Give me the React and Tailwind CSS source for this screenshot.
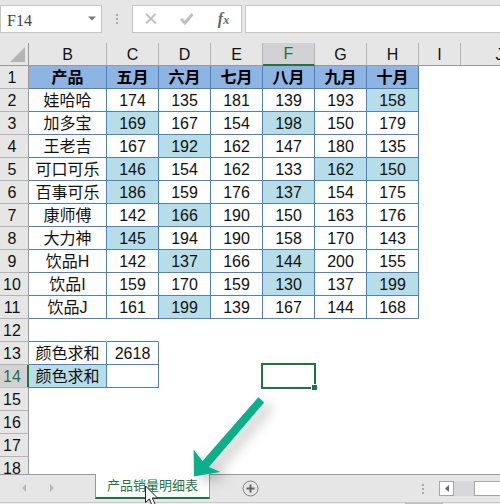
const MONTHS = ['五月', '六月', '七月', '八月', '九月', '十月'];
const COLUMNS = ['B', 'C', 'D', 'E', 'F', 'G', 'H', 'I', 'J'];

// A negative number marks a highlighted cell.
const PRODUCTS = [
  ['娃哈哈', 174, 135, 181, 139, 193, -158],
  ['加多宝', -169, 167, 154, -198, 150, 179],
  ['王老吉', 167, -192, 162, 147, 180, 135],
  ['可口可乐', -146, 154, 162, 133, -162, -150],
  ['百事可乐', -186, 159, 176, -137, 154, 175],
  ['康师傅', 142, -166, 190, 150, 163, 176],
  ['大力神', -145, 194, 190, 158, 170, 143],
  ['饮品H', 142, -137, 166, -144, 200, 155],
  ['饮品I', 159, 170, 159, -130, 137, -199],
  ['饮品J', 161, -199, 139, 167, 144, 168],
];

const CELL = 'h-[23px] px-0 pt-[2px] pb-0 text-center border-r border-b font-normal leading-[20px] ';
const LINED = CELL + 'border-[#4f81bd] ';
const BLANK = CELL + 'border-transparent ';
const HEADING = 'h-[23px] px-0 pt-px pb-0 text-center border-r border-b font-normal leading-[20px] ';

function RowHead({ n, active }) {
  return (
    <th
      scope="row"
      className={
        CELL +
        (active
          ? 'bg-[#d2d2d4] pr-[3px] text-[#217346] border-b-[#c0c0c0] border-r-2 border-r-[#217346]'
          : 'bg-[#e6e6e6] pr-1 border-b-[#b4b4b4] border-r-[#999999]')
      }
    >
      {n}
    </th>
  );
}

function Blanks({ count }) {
  return Array.from({ length: count }, (_, i) => <td key={i} className={BLANK} />);
}

function SelectedCell() {
  return (
    <td className={BLANK + 'relative'}>
      <div className="absolute -inset-[2px] border-2 border-[#217346]">
        <span className="absolute -right-[3px] -bottom-[3px] size-[6px] border-t border-l border-white bg-[#217346]" />
      </div>
    </td>
  );
}

function FormulaBar() {
  return (
    <div className="flex h-[28px] shrink-0">
      <div className="flex w-[102px] shrink-0 items-center border border-[#c6c6c6] bg-white">
        <input
          aria-label="Name box"
          defaultValue="F14"
          className="w-full min-w-0 bg-transparent pt-[3px] pl-[6px] font-['Liberation_Serif','Noto_Sans_CJK_SC',serif] text-[16px] text-[#444] outline-none"
        />
        <button aria-label="Show names" className="flex h-full w-[18px] shrink-0 items-center justify-center">
          <svg width="8" height="5" viewBox="0 0 8 5" className="mb-[2px] shrink-0">
            <path d="M0 0.5h8L4 4.5z" fill="#777" />
          </svg>
        </button>
      </div>
      <div className="flex w-[30px] shrink-0 items-center justify-center">
        <svg width="2" height="10" viewBox="0 0 2 10" fill="#aaa">
          <path d="M0 0h2v2H0zM0 4h2v2H0zM0 8h2v2H0z" />
        </svg>
      </div>
      <div className="mr-[3px] flex w-[110px] shrink-0 items-center justify-around border border-[#c6c6c6] bg-white">
        <button aria-label="Cancel">
          <svg width="12" height="12" viewBox="0 0 12 12" fill="none" stroke="#c0c0c0" strokeWidth="2">
            <path d="M1 1l10 9.5M10.500 1L1 10.500" />
          </svg>
        </button>
        <button aria-label="Enter">
          <svg width="14" height="12" viewBox="0 0 14 12" fill="none" stroke="#c0c0c0" strokeWidth="3">
            <path d="M1 6l4 4L12.500 1" />
          </svg>
        </button>
        <button
          aria-label="Insert function"
          className="font-['Liberation_Serif',serif] text-[16px] leading-[16px] font-bold text-[#666] italic"
        >
          f<span className="text-[12px]">x</span>
        </button>
      </div>
      <input aria-label="Formula" className="min-w-0 flex-1 border border-r-0 border-[#c6c6c6] bg-white outline-none" />
    </div>
  );
}

function Sheet() {
  return (
    <table className="w-[539px] table-fixed border-separate border-spacing-0 text-[16px] text-[#111]">
      <colgroup>
        <col className="w-[29px]" />
        <col className="w-[78px]" />
        {MONTHS.map((m) => (
          <col key={m} className="w-[52px]" />
        ))}
        <col className="w-[42px]" />
        <col className="w-[78px]" />
      </colgroup>
      <thead>
        <tr className="bg-[#e6e6e6]">
          <th className={HEADING + 'border-[#999999]'}>
            <svg width="15" height="15" viewBox="0 0 15 15" className="ml-[10px]" aria-label="Select all">
              <path d="M15 0v15H0z" fill="#b4b4b4" />
            </svg>
          </th>
          {COLUMNS.map((c) => (
            <th
              key={c}
              scope="col"
              className={
                HEADING +
                'border-r-[#b4b4b4] ' +
                (c === 'F'
                  ? 'border-b-2 border-b-[#217346] bg-[#d2d2d4] text-[#217346]'
                  : 'border-b-[#999999]')
              }
            >
              {c}
            </th>
          ))}
        </tr>
      </thead>
      <tbody>
        <tr>
          <RowHead n={1} />
          {['产品', ...MONTHS].map((m) => (
            <td key={m} className={LINED + 'bg-[#8db4e2]'}>
              <b className="font-bold text-black">{m}</b>
            </td>
          ))}
          <Blanks count={2} />
        </tr>
        {PRODUCTS.map(([name, ...values], i) => (
          <tr key={name}>
            <RowHead n={i + 2} />
            <td className={LINED}>{name}</td>
            {values.map((v, j) => (
              <td key={j} className={LINED + (v < 0 ? 'bg-[#b7dee8]' : '')}>
                {Math.abs(v)}
              </td>
            ))}
            <Blanks count={2} />
          </tr>
        ))}
        <tr>
          <RowHead n={12} />
          <td className={CELL + 'border-r-transparent border-b-[#4f81bd]'} />
          <td className={CELL + 'border-r-transparent border-b-[#4f81bd]'} />
          <Blanks count={7} />
        </tr>
        <tr>
          <RowHead n={13} />
          <td className={LINED}>颜色求和</td>
          <td className={LINED}>2618</td>
          <Blanks count={7} />
        </tr>
        <tr>
          <RowHead n={14} active />
          <td className={LINED + 'bg-[#b7dee8]'}>颜色求和</td>
          <td className={LINED} />
          <Blanks count={2} />
          <SelectedCell />
          <Blanks count={4} />
        </tr>
        {[15, 16, 17, 18].map((n) => (
          <tr key={n}>
            <RowHead n={n} />
            <Blanks count={9} />
          </tr>
        ))}
      </tbody>
    </table>
  );
}

function TabBar() {
  return (
    <div className="flex h-[28px] shrink-0 items-start border-t border-[#999999] bg-[#e6e6e6]">
      <div className="flex h-[26px] w-[95px] shrink-0 items-center gap-6 pl-[22px]">
        <button aria-label="Previous sheet">
          <svg width="4" height="8" viewBox="0 0 4 8" className="block">
            <path d="M4 0v8L0 4z" fill="#b8b8b8" />
          </svg>
        </button>
        <button aria-label="Next sheet">
          <svg width="4" height="8" viewBox="0 0 4 8" className="block">
            <path d="M0 0v8l4-4z" fill="#b8b8b8" />
          </svg>
        </button>
      </div>
      <button className="-mt-px h-[25px] shrink-0 border-x border-b-2 border-x-[#999999] border-b-[#217346] bg-white px-[11px] text-[13px] leading-[23px] text-[#217346]">
        产品销量明细表
      </button>
      <button aria-label="New sheet" className="mt-[5px] ml-8 shrink-0">
        <svg width="17" height="17" viewBox="0 0 17 17" fill="none" className="block">
          <circle cx="8.500" cy="8.500" r="7.500" stroke="#808080" />
          <path d="M8.500 4.500v8M4.500 8.500h8" stroke="#666" strokeWidth="2" />
        </svg>
      </button>
      <div className="mt-[6px] ml-auto flex h-[15px] w-[78px] shrink-0 items-center">
        <svg width="2" height="10" viewBox="0 0 2 10" fill="#aaa" className="mr-[15px] shrink-0">
          <path d="M0 0h2v2H0zM0 4h2v2H0zM0 8h2v2H0z" />
        </svg>
        <button
          aria-label="Scroll left"
          className="flex size-[15px] shrink-0 items-center justify-center border border-[#a6a6a6] bg-white"
        >
          <svg width="4" height="7" viewBox="0 0 4 7">
            <path d="M4 0v7L0 3.500z" fill="#666670" />
          </svg>
        </button>
        <div className="h-full w-5 shrink-0 bg-[#d8d8da]" />
        <div className="h-full flex-1 border border-r-0 border-[#a6a6a6] bg-white" />
      </div>
    </div>
  );
}

function Pointers() {
  return (
    <svg
      width="220"
      height="124"
      viewBox="0 0 220 124"
      className="pointer-events-none absolute bottom-0 left-[100px]"
      aria-hidden="true"
    >
      <defs>
        <filter id="shade" x="-30%" y="-30%" width="170%" height="170%">
          <feDropShadow dx="8" dy="5" stdDeviation="6.500" floodColor="#000" floodOpacity="0.240" />
        </filter>
      </defs>
      <path
        d="M158.300 17.200L164.200 22.500L109 87L120.500 92L94 96.500L93.600 69.500L102.500 81z"
        fill="#0aaf8b"
        filter="url(#shade)"
      />
      <path
        d="M45.500 106v16.500l3.800-3.500 3 7 3-1.300-3-6.700h5.200z"
        fill="#fff"
        stroke="#222"
        strokeWidth="1"
      />
    </svg>
  );
}

export default function App() {
  return (
    <div className="relative flex h-screen w-full flex-col overflow-hidden bg-[#e6e6e6] pt-[5px] font-['Liberation_Sans','Noto_Sans_CJK_SC',sans-serif]">
      <FormulaBar />
      <main className="mt-[10px] min-h-0 flex-1 overflow-hidden bg-white">
        <Sheet />
      </main>
      <TabBar />
      <div className="flex h-[2px] shrink-0 justify-end border-t border-[#c6c6c6] bg-[#f0f0f0] pr-[57px]">
        <div className="h-px w-[38px] bg-[#c0c0c0]" />
      </div>
      <Pointers />
    </div>
  );
}
